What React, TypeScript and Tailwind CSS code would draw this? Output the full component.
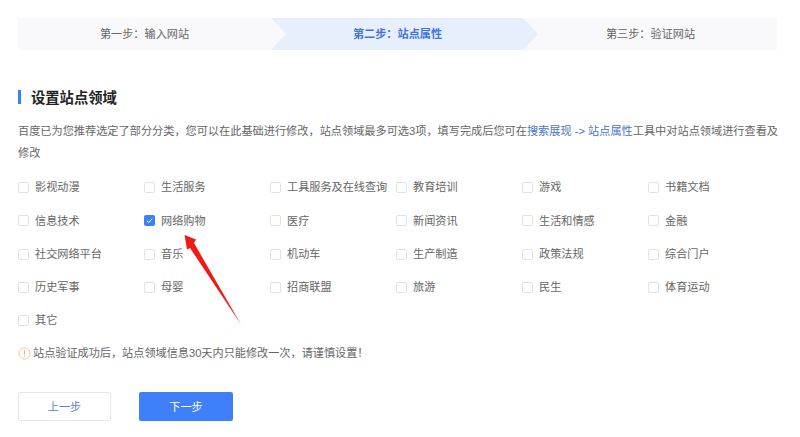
const categories = [
  "影视动漫", "生活服务", "工具服务及在线查询", "教育培训", "游戏", "书籍文档",
  "信息技术", "网络购物", "医疗", "新闻资讯", "生活和情感", "金融",
  "社交网络平台", "音乐", "机动车", "生产制造", "政策法规", "综合门户",
  "历史军事", "母婴", "招商联盟", "旅游", "民生", "体育运动",
  "其它",
];

const Checkbox = ({ checked }: { checked: boolean }) =>
  checked ? (
    <span className="flex size-[11px] items-center justify-center rounded-[2px] bg-[#3d7ff5]">
      <svg viewBox="0 0 11 11" className="size-[11px]" fill="none">
        <path d="M2.8 5.6 4.8 7.5 8.3 3.6" stroke="#fff" strokeWidth="1" />
      </svg>
    </span>
  ) : (
    <span className="size-[11px] rounded-[2px] border border-[#e2e2e6] bg-white" />
  );

const App = () => {
  return (
    <div className="relative h-[437px] w-[800px] overflow-hidden bg-white px-[18px] pt-[18px] font-['Liberation_Sans','Noto_Sans_CJK_SC',sans-serif] text-[11.15px] text-[#666]">
      <div className="flex h-8 w-[759px] bg-[#f9f9fb] text-center leading-8">
        <div className="flex-1">第一步：输入网站</div>
        <div className="relative flex-1 font-bold text-[#3f74e0]">
          <div className="absolute inset-y-0 left-0 -right-[15px] bg-[#e8effc] [clip-path:polygon(0_0,252px_0,267px_50%,252px_100%,0_100%,15px_50%)]" />
          <span className="relative">第二步：站点属性</span>
        </div>
        <div className="flex-1">第三步：验证网站</div>
      </div>

      <div className="mt-10 flex h-[14px] items-center border-l-[3px] border-[#3d7ff5] pl-[10px] text-[14.3px] font-bold text-[#222]">
        <span className="pt-[3px]">设置站点领域</span>
      </div>

      <p className="mt-4 w-[762px] text-[11.18px] leading-[22px]">
        百度已为您推荐选定了部分分类，您可以在此基础进行修改，站点领域最多可选3项，填写完成后您可在
        <span className="text-[#4a74c9]">搜索展现 -&gt; 站点属性</span>
        工具中对站点领域进行查看及修改
      </p>

      <div className="mt-[7px] grid w-[756px] grid-cols-6">
        {categories.map((name) => (
          <div key={name} className="flex h-[33.3px] items-center gap-[6px]">
            <Checkbox checked={name === "网络购物"} />
            <span>{name}</span>
          </div>
        ))}
      </div>

      <div className="mt-[8px] flex items-center gap-[2px] leading-4">
        <svg viewBox="0 0 13 13" className="size-[13px]" fill="none">
          <circle cx="6.5" cy="6.5" r="5.6" stroke="#f5c796" />
          <path d="M6.5 3.2v4.2M6.5 8.6v1.2" stroke="#eeb070" />
        </svg>
        <span>站点验证成功后，站点领域信息30天内只能修改一次，请谨慎设置！</span>
      </div>

      <div className="mt-[31px] flex gap-7">
        <button className="h-[29px] w-[93px] rounded-[2px] border border-[#e6e8ee] bg-white text-[#5b82cf]">
          上一步
        </button>
        <button className="h-[29px] w-[94px] rounded-[2px] bg-[#3f80fa] text-white">
          下一步
        </button>
      </div>

      <svg viewBox="0 0 800 437" className="pointer-events-none absolute inset-0 size-full">
        <path d="M241 324.5 194 243 196 239.5 184.5 235 187 249.5 190 248Z" fill="#ee1c14" />
      </svg>
    </div>
  );
};

export default App;
